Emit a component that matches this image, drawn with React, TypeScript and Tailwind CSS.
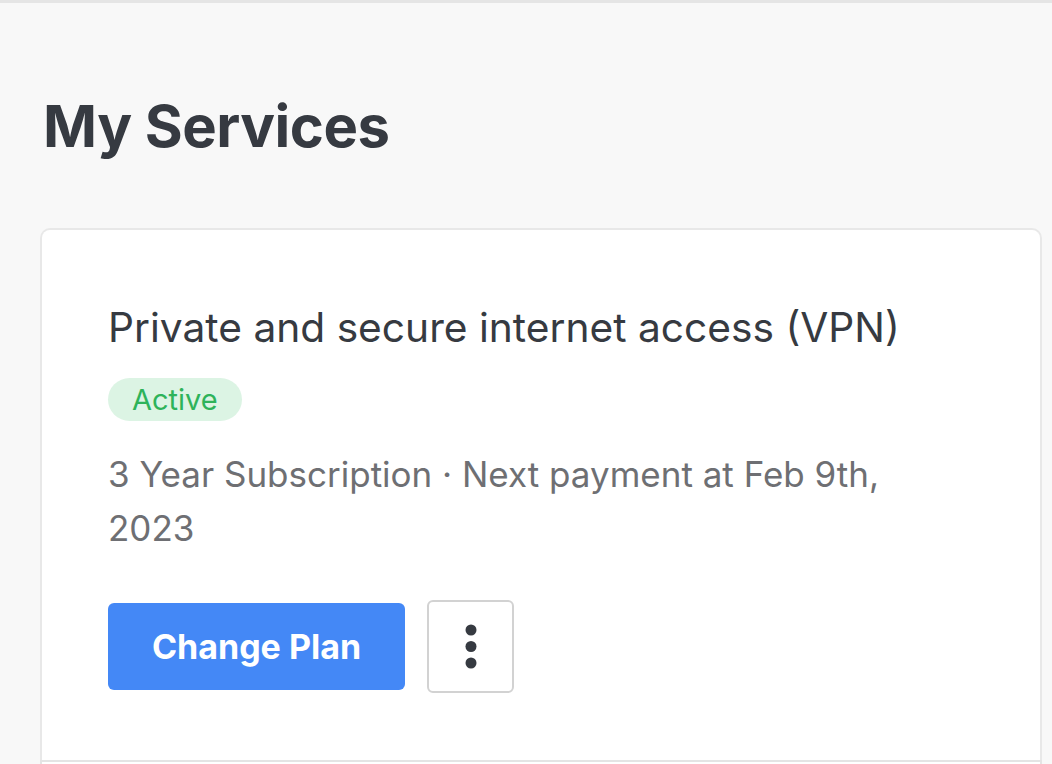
const App = () => {
  return (
    <div
      className="min-h-[764px] bg-[#f8f8f8] overflow-hidden"
      style={{ fontFamily: "Inter, 'Noto Sans', sans-serif" }}
    >
      {/* top rule */}
      <div className="h-[3px] bg-[#e5e5e5]" />

      <h1 className="ml-[43px] mt-[87px] text-[58px] leading-[72px] font-bold tracking-[-0.5px] text-[#363a41]">
        My Services
      </h1>

      <div className="ml-[40px] mr-[10px] mt-[66px] h-[532px] rounded-t-[10px] border-2 border-b-0 border-[#e8e8e8] bg-white pl-[66px] pt-[72px]">
        <h2 className="text-[40.7px] leading-[52px] font-normal text-[#363a41]">
          Private and secure internet access (VPN)
        </h2>

        <span className="mt-[24px] inline-flex h-[43px] items-center rounded-full bg-[#dcf4e4] px-[24px] text-[29px] text-[#2eb35a]">
          Active
        </span>

        <p className="mt-[26px] w-[800px] text-[35px] leading-[54px] text-[#6e6f73]">
          3 Year Subscription · Next payment at Feb 9th, 2023
        </p>

        <div className="mt-[45px] flex items-center gap-[22px]">
          <button className="h-[87px] w-[297px] rounded-[6px] bg-[#4488f6] text-[34px] font-bold text-white">
            Change Plan
          </button>
          <button className="flex h-[93px] w-[87px] items-center justify-center rounded-[6px] border-2 border-[#d2d2d2] bg-white">
            <svg width="12" height="45" viewBox="0 0 12 45">
              <circle cx="6" cy="6" r="5.5" fill="#363a41" />
              <circle cx="6" cy="22.5" r="5.5" fill="#363a41" />
              <circle cx="6" cy="39" r="5.5" fill="#363a41" />
            </svg>
          </button>
        </div>
      </div>
      <div className="ml-[40px] mr-[10px] h-[4px] border-x-2 border-t-2 border-[#e4e4e4] bg-white" />
    </div>
  );
};

export default App;
